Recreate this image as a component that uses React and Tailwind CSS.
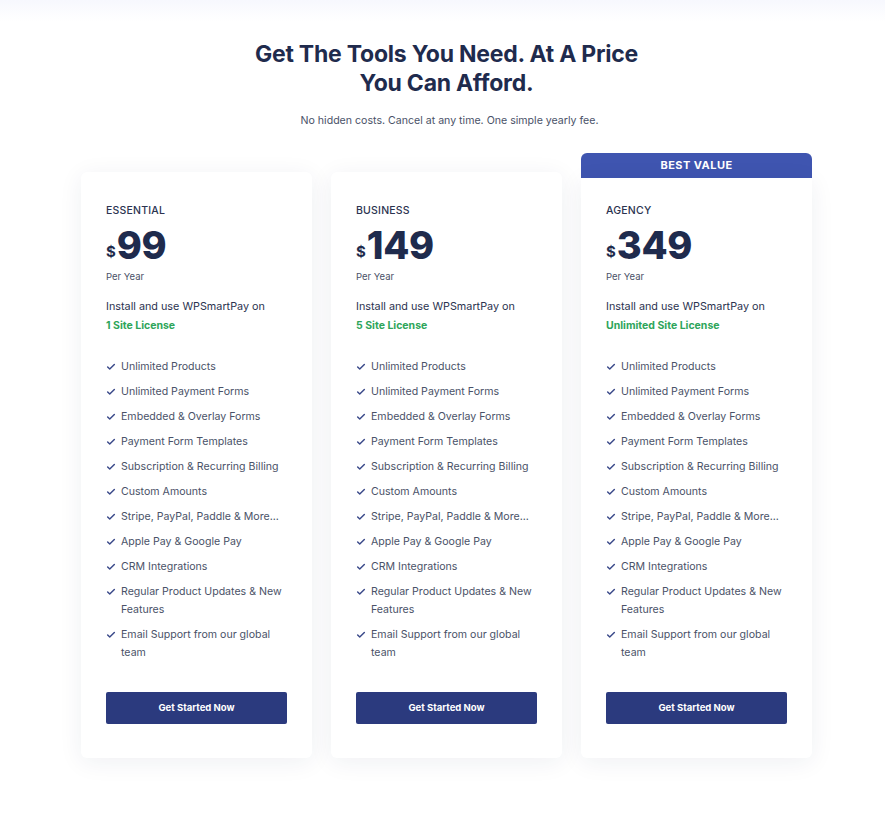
import { Check } from "lucide-react";

const features = [
  "Unlimited Products",
  "Unlimited Payment Forms",
  "Embedded & Overlay Forms",
  "Payment Form Templates",
  "Subscription & Recurring Billing",
  "Custom Amounts",
  "Stripe, PayPal, Paddle & More...",
  "Apple Pay & Google Pay",
  "CRM Integrations",
  "Regular Product Updates & New Features",
  "Email Support from our global team",
];

const plans = [
  { name: "ESSENTIAL", price: "99", license: "1 Site License" },
  { name: "BUSINESS", price: "149", license: "5 Site License" },
  { name: "AGENCY", price: "349", license: "Unlimited Site License", best: true },
];

function PlanCard({ plan }) {
  return (
    <div className="w-[231px] flex flex-col">
      {plan.best ? (
        <div className="h-[25px] bg-[#3f55b0] rounded-t-[6px] flex items-center justify-center text-white text-[11px] font-bold tracking-[0.04em]">
          BEST VALUE
        </div>
      ) : (
        <div className="h-[19px]" />
      )}
      <div
        className={`bg-white px-[25px] pb-[34px] shadow-[0_4px_24px_rgba(30,40,80,0.07)] ${
          plan.best ? "rounded-b-[6px] pt-[26px]" : "rounded-[6px] pt-[32px]"
        }`}
      >
        <div className="text-[10.5px] leading-[14px] tracking-[0.02em] text-[#2b3350] font-medium">
          {plan.name}
        </div>
        <div className="flex items-end mt-[7px] text-[#1f2b4d]">
          <span className="text-[15px] font-bold leading-none mb-[6px] mr-[1px]">$</span>
          <span className="text-[38px] font-extrabold leading-[40px] tracking-[-0.01em]">
            {plan.price}
          </span>
        </div>
        <div className="text-[9.5px] leading-[14px] text-[#4a5268] mt-[5px]">Per Year</div>
        <div className="text-[10.8px] leading-[16px] text-[#2b3350] mt-[15px]">
          Install and use WPSmartPay on
        </div>
        <div className="text-[10.5px] leading-[14px] font-bold text-[#2ea55a] mt-[4px]">
          {plan.license}
        </div>
        <ul className="mt-[25px] flex flex-col gap-[7px]">
          {features.map((f) => (
            <li key={f} className="flex items-start gap-[5px] text-[10.6px] leading-[18px] text-[#4a5268]">
              <Check size={10} strokeWidth={3.5} className="text-[#3b4a8a] mt-[4px] shrink-0" />
              <span>{f}</span>
            </li>
          ))}
        </ul>
        <button className="mt-[30px] w-full h-[32px] bg-[#2b3a7e] text-white text-[9.5px] font-bold rounded-[2px]">
          Get Started Now
        </button>
      </div>
    </div>
  );
}

export default function App() {
  return (
    <div
      className="min-h-[821px] bg-[linear-gradient(to_bottom,#f7f8fe_0px,#ffffff_22px)] pb-[40px]"
      style={{ fontFamily: "Inter, 'Noto Sans', sans-serif" }}
    >
      <div className="pt-[40px] pl-[8px] flex flex-col items-center">
        <h1 className="text-[23px] leading-[29px] font-bold text-[#1f2b4d] text-center w-[400px] tracking-[-0.01em]">
          Get The Tools You Need. At A Price You Can Afford.
        </h1>
        <p className="mt-[16px] pl-[6px] text-[10.6px] leading-[14px] text-[#4a5268]">
          No hidden costs. Cancel at any time. One simple yearly fee.
        </p>
      </div>
      <div className="mt-[25px] pl-[81px] flex gap-[19px] items-start">
        {plans.map((p) => (
          <PlanCard key={p.name} plan={p} />
        ))}
      </div>
    </div>
  );
}
